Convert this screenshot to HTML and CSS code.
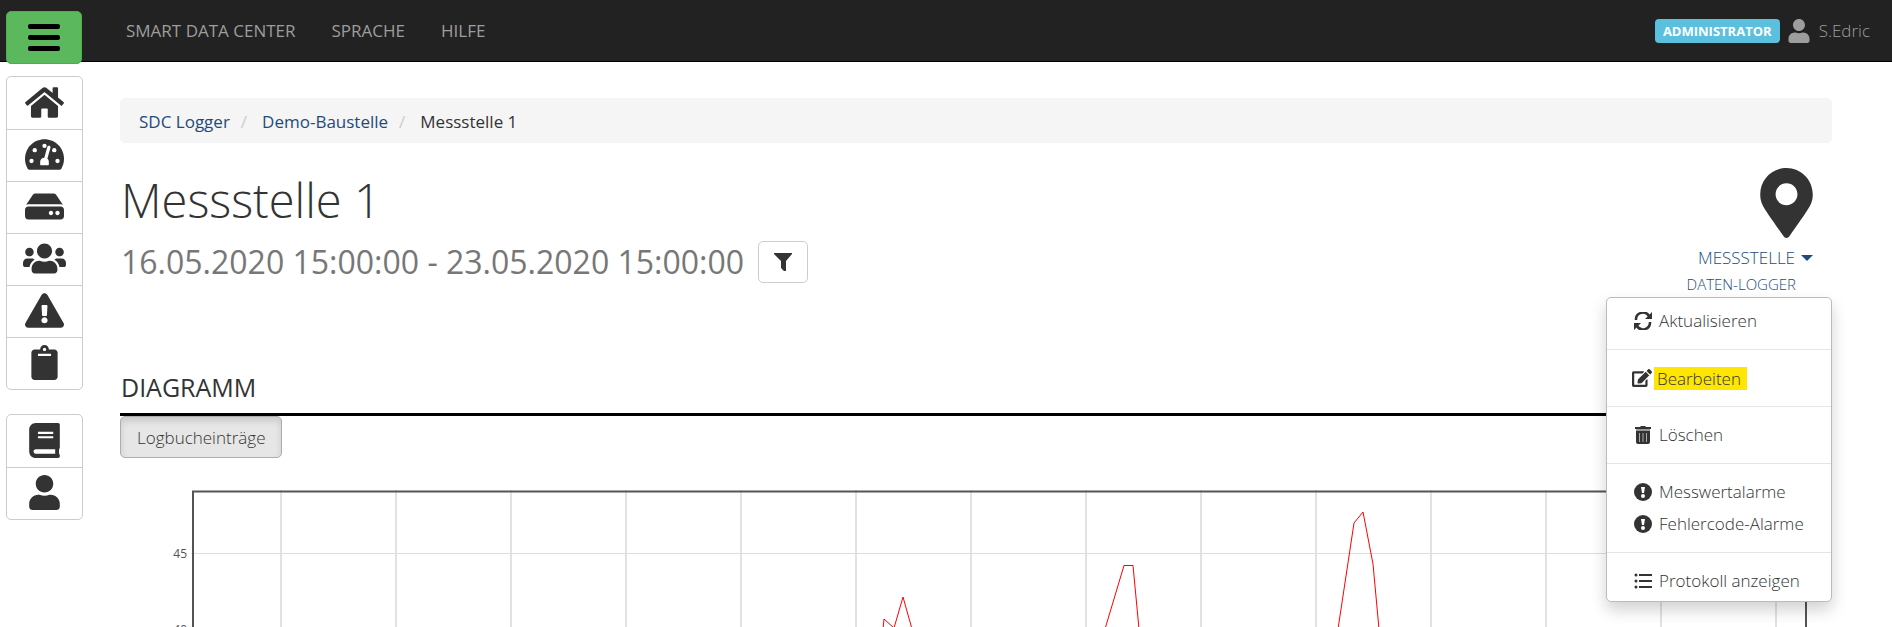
FILE: index.html
```html
<!DOCTYPE html>
<html lang="de">
<head>
    <meta charset="UTF-8">
    <title>Messstelle 1</title>
    <link rel="stylesheet" href="styles.css">
</head>
<body>
<header class="navbar">
    <button class="menuToggle" type="button" aria-label="Menü">
        <svg width="32" height="28" viewBox="0 0 32 28"><path d="M2 0h28a2 2 0 0 1 2 2v1a2 2 0 0 1-2 2H2a2 2 0 0 1-2-2V2a2 2 0 0 1 2-2zM2 11h28a2 2 0 0 1 2 2v1a2 2 0 0 1-2 2H2a2 2 0 0 1-2-2v-1a2 2 0 0 1 2-2zM2 22h28a2 2 0 0 1 2 2v1a2 2 0 0 1-2 2H2a2 2 0 0 1-2-2v-1a2 2 0 0 1 2-2z"/></svg>
    </button>
    <nav class="navLinks">
        <a href="#">SMART DATA CENTER</a>
        <a href="#">SPRACHE</a>
        <a href="#">HILFE</a>
    </nav>
    <div class="account">
        <span class="label">ADMINISTRATOR</span>
        <a href="#">
            <svg width="22" height="24" viewBox="0 0 448 512"><path d="M224 256c70.700 0 128-57.300 128-128S294.700 0 224 0 96 57.300 96 128s57.300 128 128 128zm89.600 32h-16.700c-22.200 10.200-46.900 16-72.900 16s-50.600-5.800-72.900-16h-16.700C60.200 288 0 348.200 0 422.400V464c0 26.500 21.500 48 48 48h352c26.500 0 48-21.500 48-48v-41.600c0-74.200-60.200-134.400-134.400-134.400z"/></svg>
            S.Edric
        </a>
    </div>
</header>
<div class="page">
    <aside class="sidebar">
        <nav class="btnGroup">
            <a href="#" aria-label="Start"><svg width="39" height="35" viewBox="0 0 576 512"><path d="M488 312.700V456c0 13.300-10.700 24-24 24H348c-6.600 0-12-5.400-12-12V356c0-6.600-5.400-12-12-12h-72c-6.600 0-12 5.400-12 12v112c0 6.600-5.400 12-12 12H112c-13.300 0-24-10.700-24-24V312.700c0-3.600 1.600-7 4.400-9.300l188-154.800c4.400-3.600 10.800-3.600 15.300 0l188 154.800c2.700 2.300 4.300 5.700 4.300 9.300zm83.600-60.900L488 182.900V44.400c0-6.600-5.400-12-12-12h-56c-6.600 0-12 5.400-12 12V117l-89.500-73.700c-17.700-14.600-43.300-14.600-61 0L4.400 251.800c-5.100 4.200-5.800 11.800-1.600 16.900l25.500 31c4.200 5.100 11.800 5.800 16.900 1.600l235.200-193.700c4.400-3.600 10.800-3.600 15.300 0l235.200 193.700c5.100 4.200 12.700 3.500 16.900-1.600l25.500-31c4.200-5.200 3.400-12.700-1.700-16.900z"/></svg></a>
            <a href="#" aria-label="Dashboard"><svg width="39" height="35" viewBox="0 0 576 512"><path d="M288 32C129 32 0 161 0 320c0 53 14 102 39 145 6 9 16 15 27 15h444c11 0 21-6 27-15 25-43 39-92 39-145C576 161 447 32 288 32z"/><g fill="#fff"><circle cx="288" cy="128" r="32"/><circle cx="144" cy="192" r="32"/><circle cx="96" cy="352" r="32"/><circle cx="432" cy="192" r="32"/><circle cx="480" cy="352" r="32"/><path d="M360 127c13 4 20 17 16 30l-46 162c14 11 22 27 22 45v36c0 9-5 16-13 16H237c-8 0-13-7-13-16v-36c0-33 27-59 61-60l45-161c4-13 17-20 30-16z"/></g></svg></a>
            <a href="#" aria-label="Logger"><svg width="39" height="35" viewBox="0 0 576 512"><path d="M576 304v96c0 26.510-21.490 48-48 48H48c-26.510 0-48-21.490-48-48v-96c0-26.510 21.490-48 48-48h480c26.510 0 48 21.490 48 48zm-48-80a79.557 79.557 0 0 1 30.777 6.165L462.250 85.374A48.003 48.003 0 0 0 422.311 64H153.689a48 48 0 0 0-39.938 21.374L17.223 230.165A79.557 79.557 0 0 1 48 224h480zm-48 96c-17.673 0-32 14.327-32 32s14.327 32 32 32 32-14.327 32-32-14.327-32-32-32zm-96 0c-17.673 0-32 14.327-32 32s14.327 32 32 32 32-14.327 32-32-14.327-32-32-32z"/></svg></a>
            <a href="#" aria-label="Benutzer"><svg width="43" height="35" viewBox="0 0 640 512"><path d="M96 224c35.300 0 64-28.700 64-64s-28.700-64-64-64-64 28.700-64 64 28.700 64 64 64zm448 0c35.300 0 64-28.700 64-64s-28.700-64-64-64-64 28.700-64 64 28.700 64 64 64zm32 32h-64c-17.600 0-33.500 7.100-45.100 18.600 40.300 22.100 68.900 62 75.100 109.400h66c17.700 0 32-14.300 32-32v-32c0-35.300-28.700-64-64-64zm-256 0c61.900 0 112-50.100 112-112S381.900 32 320 32 208 82.100 208 144s50.100 112 112 112zm76.800 32h-8.300c-20.800 10-43.900 16-68.500 16s-47.600-6-68.500-16h-8.300C179.600 288 128 339.600 128 403.200V432c0 26.500 21.500 48 48 48h288c26.500 0 48-21.500 48-48v-28.800c0-63.600-51.600-115.200-115.200-115.200zm-223.700-13.400C161.500 263.100 145.600 256 128 256H64c-35.300 0-64 28.700-64 64v32c0 17.700 14.300 32 32 32h65.900c6.300-47.400 34.900-87.300 75.200-109.400z"/></svg></a>
            <a href="#" aria-label="Alarme"><svg width="39" height="35" viewBox="0 0 576 512"><path d="M569.517 440.013C587.975 472.007 564.806 512 527.940 512H48.054c-36.937 0-59.999-40.055-41.577-71.987L246.423 23.985c18.467-32.009 64.720-31.951 83.154 0l239.940 416.028zM288 354c-25.405 0-46 20.595-46 46s20.595 46 46 46 46-20.595 46-46-20.595-46-46-46zm-43.673-165.346l7.418 136c.347 6.364 5.609 11.346 11.982 11.346h48.546c6.373 0 11.635-4.982 11.982-11.346l7.418-136c.375-6.874-5.098-12.654-11.982-12.654h-63.383c-6.884 0-12.356 5.780-11.981 12.654z"/></svg></a>
            <a href="#" aria-label="Protokolle"><svg width="27" height="35" viewBox="0 0 384 512"><path d="M384 112v352c0 26.510-21.490 48-48 48H48c-26.510 0-48-21.490-48-48V112c0-26.510 21.490-48 48-48h80c0-35.290 28.710-64 64-64s64 28.710 64 64h80c26.510 0 48 21.490 48 48zM192 40c-13.255 0-24 10.745-24 24s10.745 24 24 24 24-10.745 24-24-10.745-24-24-24m96 114v-20a6 6 0 0 0-6-6H102a6 6 0 0 0-6 6v20a6 6 0 0 0 6 6h180a6 6 0 0 0 6-6z"/></svg></a>
        </nav>
        <nav class="btnGroup">
            <a href="#" aria-label="Handbuch"><svg width="31" height="35" viewBox="0 0 448 512"><path d="M448 360V24c0-13.300-10.700-24-24-24H96C43 0 0 43 0 96v320c0 53 43 96 96 96h328c13.300 0 24-10.700 24-24v-16c0-7.500-3.500-14.300-8.900-18.700-4.200-15.400-4.200-59.300 0-74.700 5.400-4.300 8.900-11.100 8.900-18.600zM128 134c0-3.300 2.700-6 6-6h212c3.300 0 6 2.700 6 6v20c0 3.300-2.700 6-6 6H134c-3.300 0-6-2.700-6-6v-20zm0 64c0-3.300 2.700-6 6-6h212c3.300 0 6 2.700 6 6v20c0 3.300-2.700 6-6 6H134c-3.300 0-6-2.700-6-6v-20zm253.400 250H96c-17.700 0-32-14.300-32-32 0-17.600 14.400-32 32-32h285.400c-1.900 17.100-1.900 46.900 0 64z"/></svg></a>
            <a href="#" aria-label="Profil"><svg width="31" height="35" viewBox="0 0 448 512"><path d="M224 256c70.700 0 128-57.300 128-128S294.700 0 224 0 96 57.300 96 128s57.300 128 128 128zm89.600 32h-16.700c-22.200 10.200-46.900 16-72.900 16s-50.600-5.800-72.900-16h-16.700C60.200 288 0 348.200 0 422.400V464c0 26.500 21.500 48 48 48h352c26.500 0 48-21.500 48-48v-41.600c0-74.200-60.200-134.400-134.400-134.400z"/></svg></a>
        </nav>
    </aside>
    <main class="content">
        <ol class="breadcrumb">
            <li><a href="#">SDC Logger</a></li>
            <li><a href="#">Demo-Baustelle</a></li>
            <li>Messstelle 1</li>
        </ol>
        <div class="pageHeader">
            <div>
                <h1>Messstelle 1</h1>
                <div class="range">
                    <span>16.05.2020 15:00:00 - 23.05.2020 15:00:00</span>
                    <button class="filter" type="button" aria-label="Filter"><svg width="18" height="18" viewBox="0 0 18 18"><path d="M0 0h18v1l-6 7v10h-2l-3-3V8L0 1z"/></svg></button>
                </div>
            </div>
            <div class="object">
                <svg class="pin" width="53" height="70" viewBox="0 0 384 512"><path d="M172.300 501.700C27 291 0 269.400 0 192 0 86 86 0 192 0s192 86 192 192c0 77.400-27 99-172.300 309.700-9.500 13.800-29.900 13.800-39.400 0zM192 272c44.200 0 80-35.800 80-80s-35.800-80-80-80-80 35.800-80 80 35.800 80 80 80z"/></svg>
                <button class="objectToggle" type="button">MESSSTELLE<span class="caret"></span></button>
                <a class="objectType" href="#">DATEN-LOGGER</a>
                <ul class="dropdown">
                    <li><a href="#"><svg width="18" height="18" viewBox="0 0 18 18"><g fill="none" stroke="#333" stroke-width="2.500"><path d="M2 8a7 7 0 0 1 13-4M16 10a7 7 0 0 1-13 4"/></g><path d="M18 0v7h-7zM0 18v-7h7z"/></svg>Aktualisieren</a></li>
                    <li class="divider"></li>
                    <li><a class="edit" href="#"><svg width="20" height="18" viewBox="0 0 576 512"><path d="M402.600 83.200l90.200 90.200c3.800 3.800 3.800 10 0 13.800L274.400 405.600l-92.800 10.300c-12.400 1.400-22.900-9.100-21.500-21.500l10.300-92.800L388.800 83.200c3.800-3.800 10-3.800 13.800 0zm162-22.900l-48.800-48.800c-15.200-15.200-39.900-15.200-55.200 0l-35.400 35.400c-3.800 3.800-3.800 10 0 13.800l90.200 90.200c3.800 3.800 10 3.800 13.800 0l35.400-35.400c15.200-15.300 15.200-40 0-55.200zM384 346.200V448H64V128h229.800c3.200 0 6.200-1.300 8.500-3.500l40-40c7.600-7.600 2.200-20.500-8.500-20.500H48C21.500 64 0 85.500 0 112v352c0 26.500 21.500 48 48 48h352c26.500 0 48-21.500 48-48V306.200c0-10.700-12.900-16-20.500-8.500l-40 40c-2.200 2.300-3.500 5.300-3.500 8.500z"/></svg><mark>Bearbeiten</mark></a></li>
                    <li class="divider"></li>
                    <li><a href="#"><svg width="18" height="18" viewBox="0 0 18 18"><path d="M1 1h5l1-1h4l1 1h5v2H1z"/><path d="M2 3h14v2H2z" fill="#999"/><path d="M2 5h14v11a2 2 0 0 1-2 2H4a2 2 0 0 1-2-2z"/><path d="M5.500 7v9M9 7v9M12.500 7v9" stroke="#aaa"/></svg>Löschen</a></li>
                    <li class="divider"></li>
                    <li><a href="#"><svg width="18" height="18" viewBox="0 0 18 18"><circle cx="9" cy="9" r="9"/><path d="M7 4h4l-1 6H8z" fill="#fff"/><circle cx="9" cy="13" r="2" fill="#fff"/></svg>Messwertalarme</a></li>
                    <li><a href="#"><svg width="18" height="18" viewBox="0 0 18 18"><circle cx="9" cy="9" r="9"/><path d="M7 4h4l-1 6H8z" fill="#fff"/><circle cx="9" cy="13" r="2" fill="#fff"/></svg>Fehlercode-Alarme</a></li>
                    <li class="divider"></li>
                    <li><a href="#"><svg width="18" height="18" viewBox="0 0 18 18"><path d="M5 2h13v2H5zM5 8h13v2H5zM5 14h13v2H5z"/><circle cx="2" cy="3" r="1.500"/><circle cx="2" cy="9" r="1.500"/><circle cx="2" cy="15" r="1.500"/></svg>Protokoll anzeigen</a></li>
                </ul>
            </div>
        </div>
        <h2>DIAGRAMM</h2>
        <button class="logToggle" type="button" aria-pressed="true">Logbucheinträge</button>
        <div class="chart">
            <div class="axis"><span>45</span><span>40</span></div>
            <svg class="plot" viewBox="0 0 1616 139" preserveAspectRatio="none">
                <path class="grid" d="M90 0v139M205 0v139M320 0v139M435 0v139M550 0v139M665 0v139M780 0v139M895 0v139M1010 0v139M1125 0v139M1240 0v139M1355 0v139M1470 0v139M1585 0v139"/>
                <path class="grid thin" d="M0 63.500h1616"/>
                <path class="series" d="M692 139L693 129 703 138 712 107 721 139M914 139L933 75.500H942L948 139M1147 139L1163 33 1172 22 1182 74 1188 139"/>
                <path class="frame" d="M2 139V1.500H1615V139"/>
            </svg>
        </div>
    </main>
</div>
</body>
</html>
```
FILE: styles.css
```css
*{ box-sizing: border-box;}
body{ margin: 0; background: #fff; color: #333; font: 300 17px/26px "Open Sans", "Noto Sans", sans-serif;}
a{ color: #1d4b7c; text-decoration: none;}
button{ font: inherit; color: inherit; cursor: pointer;}
svg{ fill: #333; flex: none;}
ul, ol{ list-style: none; margin: 0; padding: 0;}

.navbar{ display: flex; align-items: center; height: 62px; padding: 0 22px 0 6px; background: #222; border-bottom: 1px solid #000;}
.menuToggle{ display: flex; align-items: center; justify-content: center; width: 76px; height: 53px; margin-top: 14px; padding: 0; background: #5cb85c; border: 1px solid #4cae4c; border-radius: 5px;}
.menuToggle svg{ fill: #000;}
.navLinks{ display: flex; gap: 36px; margin-left: 44px; font-weight: 400;}
.navbar a{ color: #9d9d9d;}
.account{ display: flex; align-items: center; gap: 8px; margin-left: auto;}
.account a{ display: flex; align-items: center; gap: 9px;}
.account svg{ fill: #9d9d9d;}
.label{ padding: 0 8px; border-radius: 4px; background: #5bc0de; color: #fff; font-size: 13px; font-weight: bold; line-height: 24px;}

.page{ display: flex;}
.sidebar{ flex: none; width: 77px; margin: 14px 37px 0 6px;}
.btnGroup{ margin-bottom: 24px; border: 1px solid #ccc; border-radius: 5px;}
.btnGroup a{ display: flex; align-items: center; justify-content: center; height: 52px; padding-bottom: 2px;}
.btnGroup a + a{ border-top: 1px solid #ccc;}

.content{ flex: 1; min-width: 0; padding: 36px 60px 0 0;}
.breadcrumb{ display: flex; padding: 11px 19px 9px; border-radius: 5px; background: #f5f5f5; font-weight: 400; line-height: 25px;}
.breadcrumb li + li:before{ content: "/"; padding: 0 15px 0 11px; color: #ccc;}

.pageHeader{ display: flex; justify-content: space-between; height: 208px; padding-top: 25px;}
h1{ margin: 0; padding-left: 1px; font-size: 47px; font-weight: 300; line-height: 64px;}
.range{ display: flex; align-items: center; gap: 14px; margin-top: 9px; padding-left: 1px; color: #777; font-size: 32px; font-weight: 400; line-height: 42px;}
.filter{ display: flex; align-items: center; justify-content: center; width: 50px; height: 42px; padding: 0; background: #fff; border: 1px solid #ccc; border-radius: 5px;}

.object{ position: relative; display: flex; flex-direction: column; align-items: flex-end; padding-right: 19px;}
.objectToggle{ display: flex; align-items: center; gap: 6px; margin-top: 7px; padding: 0; border: 0; background: none; color: #1d4b7c; font-weight: 300;}
.caret{ border: 6px solid transparent; border-top-color: #1d4b7c; border-bottom: 0;}
.objectType{ margin-right: 17px; font-size: 15px;}
.dropdown{ position: absolute; top: 129px; right: 0; width: 226px; padding: 7px 0 4px; background: #fff; border: 1px solid #bbb; border-radius: 5px; box-shadow: 0 8px 16px rgba(0,0,0,.18);}
.dropdown a{ display: flex; align-items: center; gap: 7px; height: 32px; padding-left: 27px; color: #333; line-height: 32px; white-space: nowrap;}
.dropdown .edit{ gap: 2px; padding-left: 25px;}
.dropdown mark{ padding: 0 6px 0 3px; background: #ffe600; color: #333; line-height: 23px;}
.divider{ height: 1px; margin: 12px 0; background: #e5e5e5;}

h2{ margin: 0; padding: 20px 0 10px 1px; border-bottom: 3px solid #000; font-size: 25px; font-weight: 400; line-height: 32px;}
.logToggle{ display: block; height: 42px; padding: 2px 16px 0; background: #e6e6e6; border: 1px solid #adadad; border-radius: 5px; box-shadow: inset 0 4px 6px rgba(0,0,0,.125);}
.chart{ display: flex; height: 139px; margin: 32px 25px 0 0; overflow: hidden;}
.axis{ display: flex; flex-direction: column; gap: 60px; width: 71px; padding: 56px 4px 0 0; color: #545454; font-size: 12px; font-weight: 400; line-height: 16px; text-align: right;}
.plot{ flex: 1; min-width: 0; height: 139px;}
.plot path{ fill: none; vector-effect: non-scaling-stroke;}
.plot .grid{ stroke: #e2e2e2; stroke-width: 2px;}
.plot .thin{ stroke: #ddd; stroke-width: 1px;}
.plot .series{ stroke: #f00; stroke-width: 1px;}
.plot .frame{ stroke: #545454; stroke-width: 2px;}
```
